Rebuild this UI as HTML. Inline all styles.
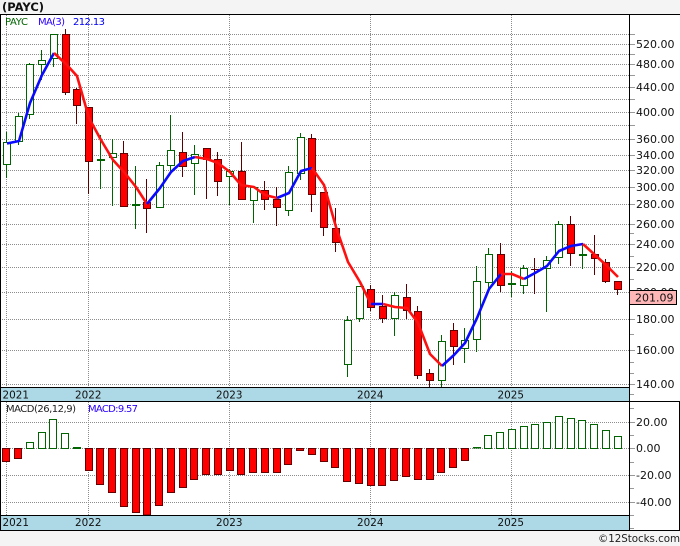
<!DOCTYPE html>
<html>
<head>
<meta charset="utf-8">
<title>PAYC</title>
<style>
html,body{margin:0;padding:0;background:#f4f4f4;}
svg{display:block;}
text{font-family:"DejaVu Sans","Liberation Sans",sans-serif;}
</style>
</head>
<body>
<svg xmlns="http://www.w3.org/2000/svg" width="680" height="546" viewBox="0 0 680 546">
<rect x="0" y="0" width="680" height="546" fill="#f4f4f4"/>
<rect x="0" y="14" width="680" height="517" fill="#ffffff"/>
<text x="2" y="11" font-size="11.5" font-weight="bold" fill="#111">(PAYC)</text>

<g shape-rendering="crispEdges">
<path fill="none" stroke="#8c8c8c" stroke-dasharray="1 1" d="M2 34.5H629M2 44.5H629M2 54.5H629M2 64.5H629M2 75.5H629M2 87.5H629M2 99.5H629M2 112.5H629M2 125.5H629M2 139.5H629M2 155.5H629M2 170.5H629M2 187.5H629M2 204.5H629M2 224.5H629M2 244.5H629M2 267.5H629M2 292.5H629M2 319.5H629M2 350.5H629M2 384.5H629M6.5 15V387M88.5 15V387M229.5 15V387M370.5 15V387M511.5 15V387M2 422.5H629M2 448.5H629M2 475.5H629M2 502.5H629M6.5 402V515M88.5 402V515M229.5 402V515M370.5 402V515M511.5 402V515"/>
<path fill="none" stroke="#999" d="M630 34.5H635M630 44.5H635M630 54.5H635M630 64.5H635M630 75.5H635M630 87.5H635M630 99.5H635M630 112.5H635M630 125.5H635M630 139.5H635M630 155.5H635M630 170.5H635M630 187.5H635M630 204.5H635M630 224.5H635M630 244.5H635M630 267.5H635M630 319.5H635M630 350.5H635M630 384.5H635M630 233.5H634M630 256.5H634M630 279.5H634M630 334.5H634M630 362.5H634M630 373.5H634M630 394.5H634M630 408.5H634M630 422.5H635M630 435.5H634M630 448.5H635M630 462.5H634M630 475.5H635M630 488.5H634M630 502.5H635M630 515.5H634M630 528.5H634"/>

<!-- wicks -->
<path fill="none" stroke="#006400" d="M6.5 132V178M18.5 113V145M29.5 63V119M41.5 50V80M53.5 34V67M100.5 135V189M112.5 139V206M135.5 166V229M159.5 162V208M170.5 115V171M194.5 145V195M229.5 169V205M253.5 187V223M288.5 166V216M300.5 133V180M347.5 316V377M359.5 286V322M394.5 292V336M441.5 335V387M464.5 328V363M476.5 266V352M488.5 248V290M511.5 271V297M523.5 265V294M546.5 256V312M558.5 221V264M582.5 243V269"/>
<path fill="none" stroke="#5a0000" d="M65.5 29V95M76.5 88V124M88.5 107V194M123.5 141V207M146.5 179V233M182.5 132V177M206.5 148V199M217.5 152V196M241.5 142V200M264.5 181V210M276.5 187V226M311.5 134V212M323.5 192V236M335.5 208V252M370.5 285V311M382.5 295V323M406.5 284V319M417.5 306V379M429.5 369V387M453.5 323V365M500.5 243V292M534.5 258V294M531 269.5H539M570.5 216V266M594.5 235V275M605.5 259V283M617.5 281V295"/>

<!-- bodies -->
<path fill="#fff" stroke="#006400" d="M3.5 142.5h7v22h-7zM15.5 116.5h7v25h-7zM26.5 64.5h7v50h-7zM38.5 60.5h7v4h-7zM50.5 34.5h7v24h-7zM97.5 159.5h7v1h-7zM109.5 153.5h7v4h-7zM132.5 204.5h7v1h-7zM156.5 165.5h7v42h-7zM167.5 150.5h7v15h-7zM191.5 154.5h7v9h-7zM226.5 171.5h7v5h-7zM250.5 187.5h7v13h-7zM285.5 172.5h7v38h-7zM297.5 137.5h7v36h-7zM344.5 320.5h7v44h-7zM356.5 286.5h7v32h-7zM391.5 295.5h7v23h-7zM438.5 341.5h7v39h-7zM461.5 340.5h7v8h-7zM473.5 281.5h7v58h-7zM485.5 254.5h7v28h-7zM508.5 283.5h7v1h-7zM520.5 268.5h7v17h-7zM543.5 260.5h7v8h-7zM555.5 224.5h7v33h-7zM579.5 254.5h7v1h-7z"/>
<path fill="#ff0000" stroke="#660000" d="M62.5 34.5h7v58h-7zM73.5 89.5h7v16h-7zM85.5 107.5h7v54h-7zM120.5 153.5h7v53h-7zM143.5 202.5h7v6h-7zM179.5 152.5h7v14h-7zM203.5 148.5h7v11h-7zM214.5 159.5h7v22h-7zM238.5 171.5h7v28h-7zM261.5 190.5h7v9h-7zM273.5 199.5h7v8h-7zM308.5 138.5h7v56h-7zM320.5 192.5h7v35h-7zM332.5 228.5h7v14h-7zM367.5 289.5h7v18h-7zM379.5 306.5h7v12h-7zM403.5 297.5h7v13h-7zM414.5 311.5h7v64h-7zM426.5 373.5h7v7h-7zM450.5 330.5h7v16h-7zM497.5 254.5h7v31h-7zM567.5 224.5h7v29h-7zM591.5 254.5h7v4h-7zM602.5 262.5h7v19h-7zM614.5 281.5h7v8h-7z"/>

<!-- MACD bars -->
<path fill="#ff0000" stroke="#660000" d="M2.5 448.5h7V461.5h-7zM14.5 448.5h7V458.5h-7zM85.5 448.5h7V470.5h-7zM96.5 448.5h7V484.5h-7zM108.5 448.5h7V492.5h-7zM120.5 448.5h7V506.5h-7zM132.5 448.5h7V512.5h-7zM143.5 448.5h7V515h-7zM155.5 448.5h7V505.5h-7zM167.5 448.5h7V492.5h-7zM179.5 448.5h7V487.5h-7zM190.5 448.5h7V479.5h-7zM202.5 448.5h7V474.5h-7zM214.5 448.5h7V474.5h-7zM226.5 448.5h7V470.5h-7zM237.5 448.5h7V474.5h-7zM249.5 448.5h7V472.5h-7zM261.5 448.5h7V472.5h-7zM273.5 448.5h7V472.5h-7zM284.5 448.5h7V464.5h-7zM296.5 448.5h7V450.5h-7zM308.5 448.5h7V454.5h-7zM320.5 448.5h7V461.5h-7zM331.5 448.5h7V467.5h-7zM343.5 448.5h7V481.5h-7zM355.5 448.5h7V483.5h-7zM367.5 448.5h7V485.5h-7zM378.5 448.5h7V485.5h-7zM390.5 448.5h7V480.5h-7zM402.5 448.5h7V476.5h-7zM414.5 448.5h7V479.5h-7zM426.5 448.5h7V479.5h-7zM437.5 448.5h7V472.5h-7zM449.5 448.5h7V467.5h-7zM461.5 448.5h7V460.5h-7z"/>
<path fill="#fff" stroke="#006400" d="M26.5 442.5h7V448.5h-7zM38.5 432.5h7V448.5h-7zM49.5 419.5h7V448.5h-7zM61.5 433.5h7V448.5h-7zM73.5 447.5h7V448.5h-7zM473.5 447.5h7V448h-7zM484.5 435.5h7V448.5h-7zM496.5 432.5h7V448.5h-7zM508.5 429.5h7V448.5h-7zM520.5 426.5h7V448.5h-7zM531.5 424.5h7V448.5h-7zM543.5 422.5h7V448.5h-7zM555.5 416.5h7V448.5h-7zM567.5 418.5h7V448.5h-7zM578.5 420.5h7V448.5h-7zM590.5 424.5h7V448.5h-7zM602.5 430.5h7V448.5h-7zM614.5 436.5h7V448.5h-7z"/>

<!-- date bands -->
<rect x="1" y="388" width="628" height="13" fill="#add8e6"/>
<rect x="1" y="516" width="628" height="14" fill="#add8e6"/>
<path fill="none" stroke="#000" d="M0 14.5H680M0 387.5H630M0 401.5H680M0 515.5H630M0 530.5H680M0.5 14V531M629.5 14V531M679.5 401V531"/>
</g>

<!-- moving average -->
<g fill="none" stroke-width="2.6" stroke-linejoin="round">
<polyline stroke="#0a0aff" points="7,143.5 19,141 30,103 42,75 54,53"/>
<polyline stroke="#ff1010" points="54,53 66,64 77,76 89,118 101,140 113,160 124,172 136,187 147,204"/>
<polyline stroke="#0a0aff" points="147,204 160,188 171,172 183,161 195,157"/>
<polyline stroke="#ff1010" points="195,157 207,159 218,163 230,172 241,185 254,187 265,195 277,198"/>
<polyline stroke="#0a0aff" points="277,198 289,193 301,171 312,168"/>
<polyline stroke="#ff1010" points="312,168 324,185 336,227 348,262 360,282 371,304"/>
<polyline stroke="#0a0aff" points="371,304 383,304"/>
<polyline stroke="#ff1010" points="383,304 395,307 407,308 418,323 430,354 442,366"/>
<polyline stroke="#0a0aff" points="442,366 454,355 465,343 477,318 489,289 501,274"/>
<polyline stroke="#ff1010" points="501,274 512,274 524,279"/>
<polyline stroke="#0a0aff" points="524,279 535,273 547,266 559,251 571,246 583,244"/>
<polyline stroke="#ff1010" points="583,244 595,255 606,265 618,277"/>
</g>

<!-- legends -->
<text x="5" y="25" font-size="10" fill="#006400" textLength="23">PAYC</text>
<text x="38" y="25" font-size="10" fill="#2a00ff" textLength="27">MA(3)</text>
<text x="73" y="25" font-size="10" fill="#0000ee" textLength="32">212.13</text>
<text x="6" y="412" font-size="10" fill="#222" textLength="70">MACD(26,12,9)</text>
<text x="88" y="412" font-size="10" fill="#2a00ff" textLength="50">MACD:9.57</text>

<!-- price axis -->
<g font-size="11" fill="#111">
<text x="636" y="48">520.00</text>
<text x="636" y="68">480.00</text>
<text x="636" y="91">440.00</text>
<text x="636" y="116">400.00</text>
<text x="636" y="143">360.00</text>
<text x="636" y="159">340.00</text>
<text x="636" y="174">320.00</text>
<text x="636" y="191">300.00</text>
<text x="636" y="208">280.00</text>
<text x="636" y="228">260.00</text>
<text x="636" y="248">240.00</text>
<text x="636" y="271">220.00</text>
<text x="636" y="296">200.00</text>
<text x="636" y="323">180.00</text>
<text x="636" y="354">160.00</text>
<text x="636" y="388">140.00</text>
<text x="636" y="426">20.00</text>
<text x="636" y="452">0.00</text>
<text x="636" y="479">-20.00</text>
<text x="636" y="506">-40.00</text>
</g>

<!-- last price box -->
<rect x="629.5" y="290.5" width="47" height="14" fill="#ffb6b6" stroke="#000" shape-rendering="crispEdges"/>
<text x="635" y="301.5" font-size="11" fill="#111">201.09</text>

<!-- year labels -->
<g font-size="10.4" fill="#111">
<text x="2.5" y="398.5">2021</text>
<text x="75" y="398.5">2022</text>
<text x="216" y="398.5">2023</text>
<text x="357" y="398.5">2024</text>
<text x="497.5" y="398.5">2025</text>
<text x="2.5" y="526">2021</text>
<text x="75" y="526">2022</text>
<text x="216" y="526">2023</text>
<text x="357" y="526">2024</text>
<text x="497.5" y="526">2025</text>
</g>

<text x="598" y="542" font-size="10.3" fill="#222" textLength="82">©12Stocks.com</text>
</svg>
</body>
</html>
